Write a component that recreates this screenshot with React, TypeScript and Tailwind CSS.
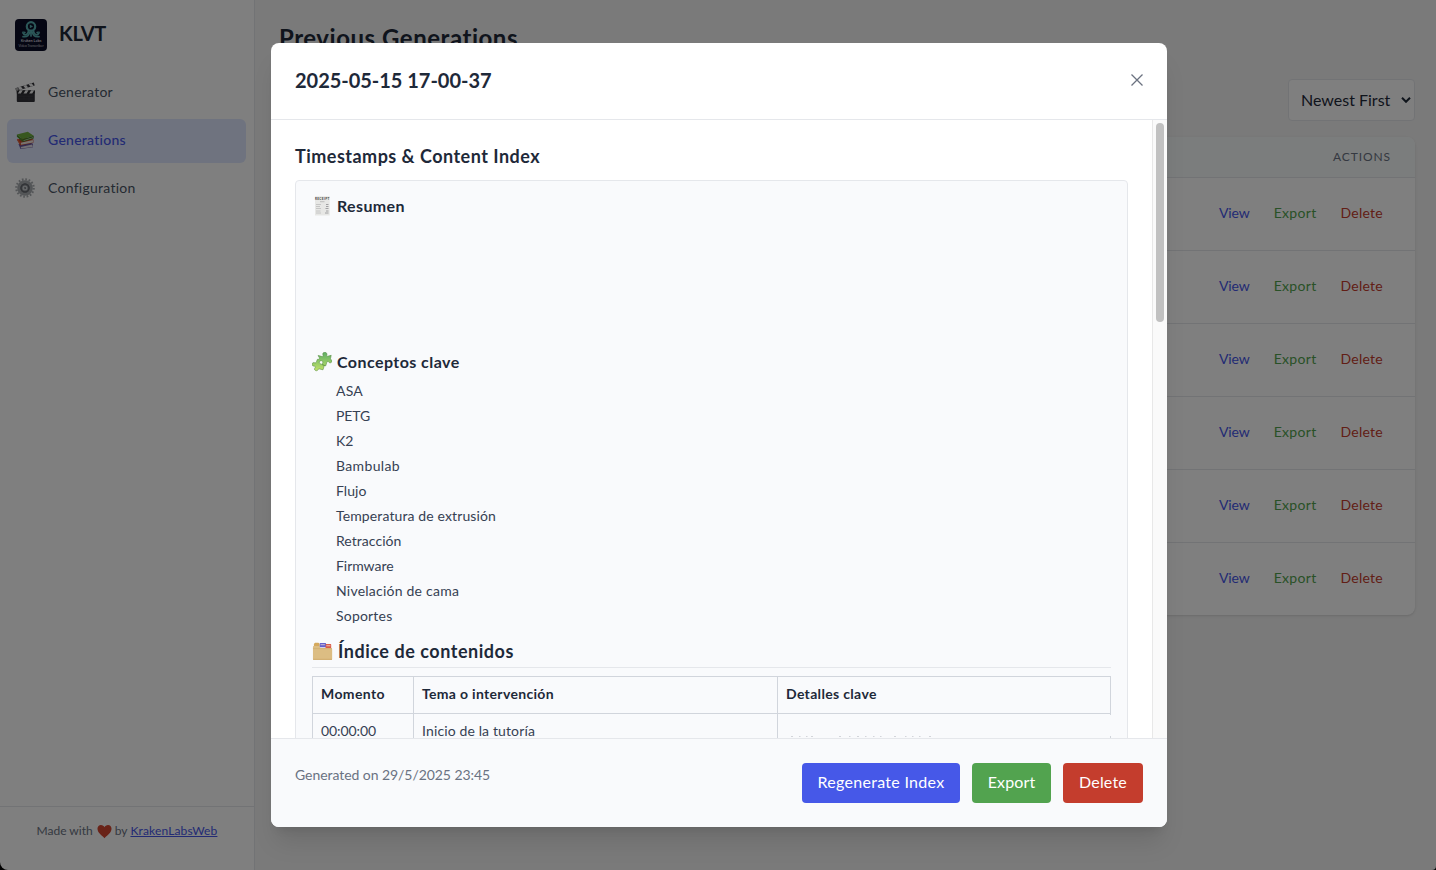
import React from "react";

function KrakenLogo() {
  return (
    <svg viewBox="0 0 32 32" className="h-8 w-8 shrink-0 rounded">
      <rect width="32" height="32" fill="#0b0d26" />
      <g fill="none" stroke="#57aeb0" strokeWidth="1.7" strokeLinecap="round">
        <circle cx="16" cy="7.400" r="4.200" strokeWidth="2.200" />
        <path d="M13.500 11.500c0 3-2 4.600-3.600 4.300-1.800-.3-1.300-2.600 0-2.300M18.500 11.500c0 3 2 4.600 3.600 4.300 1.800-.3 1.300-2.600 0-2.300" />
        <path d="M14.500 13c0 3-2 5.300-6.500 4.600M17.500 13c0 3 2 5.300 6.500 4.600M16 12v5" />
        <path d="M8 12.500c-1 .8-.8 2 .2 2.600M24 12.500c1 .8.800 2-.2 2.600" strokeWidth="1" />
      </g>
      <path d="M14.800 5.500l3.200 1.900-3.200 1.900z" fill="#57aeb0" />
      <text x="16" y="23" textAnchor="middle" fontSize="3.800" fontWeight="700" fill="#d4d4dc" className="font-['Lato']">Kraken Labs</text>
      <text x="16" y="28.200" textAnchor="middle" fontSize="3.300" fill="#c4c4d0" className="font-['Lato']">Video Transcriber</text>
    </svg>
  );
}

function Clapper() {
  return (
    <svg viewBox="0 0 20 20" className="h-5 w-5">
      <path d="M.4 6.200L18.800.6l.9 2.900L1.400 9z" fill="#34343a" />
      <path d="M2.800 5.500l3-.9 2 2.400-3 .9zM8.200 3.800l3-.9 2 2.500-3 .9zM13.600 2.200l3-.9 2 2.500-3 .9z" fill="#f2f2f2" />
      <rect x="1.800" y="8.300" width="18" height="11.700" rx=".9" fill="#323238" />
      <path d="M1.800 8.500h18v3h-18z" fill="#29292d" />
      <path d="M4.800 8.300h3l-2 3.100h-3zM10.500 8.300h3l-2 3.100h-3zM16.200 8.300h3l-2 3.100h-3z" fill="#f2f2f2" />
      <path d="M3.200 14.200h15M3.200 17h15M9 14v3M14 14v5" stroke="#45454c" strokeWidth=".5" />
      <circle cx="2" cy="7.300" r="1.500" fill="#aaa" />
    </svg>
  );
}

function Books() {
  return (
    <svg viewBox="0 0 20 20" className="h-5 w-5">
      <path d="M3.500 14.300l2 4.800 12.500-1.800v-3.500l-7-3z" fill="#6957a0" />
      <path d="M5.700 17l11.600-2.400.5 2.300-11.600 1.700z" fill="#e4e0e8" />
      <path d="M2.200 9.500l3.200 6 13-2.700V9.500l-8-2z" fill="#c9442c" />
      <path d="M5.700 12.800L17.800 10l.3 2.500-12 2.300z" fill="#eee6df" />
      <path d="M2.200 8.500l3.200 4.200v2.800L1.900 10z" fill="#e0643e" />
      <path d="M1.900 4.600L12.800 1.700l5.900 4.100-11 3.500z" fill="#6fae3c" />
      <path d="M1.900 4.600l5.800 4.700v2.600L1.900 6.800z" fill="#4d8e29" />
      <path d="M7.700 9.300l11-3.500v2.700l-11 3.400z" fill="#417d25" />
      <path d="M8.500 10.200l9.600-3v.8l-9.600 3z" fill="#c5d3b0" />
    </svg>
  );
}

function Gear() {
  return (
    <svg viewBox="0 0 20 20" className="h-5 w-5">
      <circle cx="10" cy="10" r="8.700" fill="none" stroke="#a9adb1" strokeWidth="2.200" strokeDasharray="1.700 1.717" />
      <circle cx="10" cy="10" r="6.500" fill="none" stroke="#a6aaae" strokeWidth="2.600" />
      <circle cx="10" cy="10" r="5.200" fill="#7c8086" />
      <circle cx="10" cy="10" r="4" fill="none" stroke="#5c6066" strokeWidth=".8" />
      <circle cx="10" cy="10" r="2.600" fill="#c9ccd0" />
      <path d="M9.500 8.800l1.700 1.200-1.500 1.300z" fill="#45484d" />
    </svg>
  );
}

function Heart() {
  return (
    <svg viewBox="0 0 16 15" className="h-[15px] w-[15px]">
      <path d="M8 14.600C5 11.700.5 8.600.5 4.600.5 2.200 2.200.6 4.200.6 6 .6 7.300 1.600 8 3c.7-1.400 2-2.400 3.800-2.400 2 0 3.700 1.600 3.700 4 0 4-4.500 7.100-7.500 10z" fill="#d34631" />
    </svg>
  );
}

function Receipt() {
  return (
    <svg viewBox="0 0 20 20" className="h-5 w-5">
      <path d="M3 .3h14.700v19.300H3z" fill="#e7e7e5" />
      <text x="10.300" y="4.100" textAnchor="middle" fontSize="3.100" fontWeight="700" fill="#444" className="font-['Lato']">RECEIPT</text>
      <path d="M8 5.700h4.500" stroke="#aaa" strokeWidth=".7" />
      <path d="M4 8.500h5M4 10.500h4M4 12.500h5M4 15h4.500M4 17h5" stroke="#bcbcbd" strokeWidth=".8" />
      <path d="M14 8.500h2.500M14 10.500h2.500M13.500 12.500h3M14 15h2.500M13 17h3.500" stroke="#97979a" strokeWidth=".9" />
    </svg>
  );
}

function Puzzle() {
  return (
    <svg viewBox="0 0 20 20" className="h-5 w-5">
      <defs>
        <linearGradient id="leaf" x1="0" y1="0" x2="0" y2="1">
          <stop offset="0" stopColor="#5eae66" />
          <stop offset="1" stopColor="#c1e268" />
        </linearGradient>
      </defs>
      <path
        d="M6.200 3.400l3.800 1.200c1 .2 1.300-.5 1-1.400-.6-1.800.2-3 1.900-2.900 1.700.1 2.400 1.500 1.900 2.800-.4.900.1 1.400 1.100 1.100l3.300-.9-.7 3.200c-.1.900.4 1.200 1 1.400.8.400.6 2.300-.7 2.800-1.200.4-1.900-.5-2.400-1-.7-.5-1.400-.1-1.600.6l-1.100 3.600-3-1c-.8-.4-.6-1.100-.1-1.800.6-1 .1-2.200-1.200-2.400-1.400-.2-2.200.9-2 2.100.2.9.9 1 1.700 1.400l3.300 1.100-1.400 4.500-3.600-.9c-1-.2-1.100.7-1.800 1.400-1.200 1-3.200.2-3.100-1.400.1-1 1.100-1.400.8-2.300-.3-.7-1.600-.2-2.400-.7-1.300-.7-1.100-2.700.2-3.200 1-.4 1.700.3 2.500.1.900-.3 1.200-2.100 1.500-3.100.3-.8 1.600.2 2.200-.9.500-1.100-.5-1.900-1.100-2.700z"
        fill="url(#leaf)"
        stroke="#5a8f45"
        strokeWidth=".6"
      />
    </svg>
  );
}

function Dividers() {
  return (
    <svg viewBox="0 0 22 20" className="h-5 w-[21px]">
      <path d="M2 6V3.200C2 2 3 1.400 4 1.400h2.500c1 0 1.500.8 1.500 1.600V6z" fill="#d5a95d" />
      <path d="M8.300 1.500h5.400c.7 0 1 .5 1 1V6H8z" fill="#6460cd" />
      <path d="M14.500 2.600h4.600c.7 0 1 .5 1 1V7h-6z" fill="#db5b45" />
      <path d="M9 3.400h4.500M15 4.500h4.300" stroke="#f0d8d4" strokeWidth=".8" />
      <path d="M1 6c0-.7.400-1.200 1-1.200h5.500l1.500 2h11c.7 0 1.100.4 1.100 1v10.500c0 .6-.5 1-1.100 1H2c-.6 0-1-.4-1-1z" fill="#dcbd83" />
      <path d="M1 7.500h20" stroke="#c6a266" strokeWidth=".5" />
      <path d="M1 18.200h20v.8H1z" fill="#cda768" />
    </svg>
  );
}

const navItems = [
  { label: "Generator", icon: <Clapper />, active: false },
  { label: "Generations", icon: <Books />, active: true },
  { label: "Configuration", icon: <Gear />, active: false },
];

const concepts: [string, string][] = [
  ["ASA", "tracking-[0.2px]"],
  ["PETG", "tracking-[-0.1px]"],
  ["K2", "tracking-normal"],
  ["Bambulab", "tracking-[0.36px]"],
  ["Flujo", "tracking-[0.05px]"],
  ["Temperatura de extrusión", "tracking-[0.12px]"],
  ["Retracción", "tracking-[0.05px]"],
  ["Firmware", "tracking-[-0.05px]"],
  ["Nivelación de cama", "tracking-[0.23px]"],
  ["Soportes", "tracking-[0.2px]"],
];

function Sidebar() {
  return (
    <aside className="flex w-[255px] shrink-0 flex-col border-r border-gray-200 bg-white">
      <div className="flex h-[71px] items-start gap-3 pt-[19px] pl-[15px]">
        <KrakenLogo />
        <h1 className="text-xl leading-[29px] font-bold tracking-[-0.32px] text-gray-800">KLVT</h1>
      </div>
      <nav className="flex flex-1 flex-col gap-1 pr-2 pl-[7px]">
        {navItems.map((n) => (
          <a
            key={n.label}
            className={
              "flex h-11 items-center gap-[13px] rounded-md pl-2 text-sm tracking-[0.26px] " +
              (n.active ? "bg-[#dfe7ff] font-medium text-[#4656e8]" : "text-gray-600")
            }
          >
            <span className="pb-[2px]">{n.icon}</span>
            <span className="pb-[2px]">{n.label}</span>
          </a>
        ))}
      </nav>
      <div className="flex h-16 items-start justify-center border-t border-gray-200 pt-4 text-xs leading-4 text-gray-500">
        <p className="flex items-center">
          <span>Made with</span>
          <span className="mr-[3px] ml-1"><Heart /></span>
          <span className="mr-[3px]">by</span>
          <a className="tracking-[0.14px] text-[#4656e8] underline">KrakenLabsWeb</a>
        </p>
      </div>
    </aside>
  );
}

function GenerationsPage() {
  return (
    <main className="flex flex-1 flex-col bg-[#f4f4f4] pr-[21px] pl-6">
      <h2 className="mt-[22px] text-2xl leading-8 font-bold tracking-[0.53px] text-gray-800">Previous Generations</h2>
      <div className="mt-[25px] flex h-[42px] w-[127px] items-center justify-between self-end rounded border border-gray-200 bg-white pr-[3px] pl-3 text-base text-gray-800">
        <span className="pb-px">Newest First</span>
        <svg viewBox="0 0 10 6" className="h-[6px] w-[10px]" fill="none" stroke="#1f2937" strokeWidth="2">
          <path d="M1 .8l4 4 4-4" />
        </svg>
      </div>
      <div className="mt-4 overflow-hidden rounded-lg bg-white shadow">
        <div className="flex h-10 items-center justify-end bg-[#f6fafa] pr-6 text-xs tracking-[0.9px] text-gray-500">ACTIONS</div>
        {[0, 1, 2, 3, 4, 5].map((i) => (
          <div key={i} className="flex h-[73px] items-center justify-end gap-6 border-t border-gray-200 pr-8 pb-[2px] text-sm">
            <a className="tracking-[-0.1px] text-[#4656e8]">View</a>
            <a className="tracking-[0.3px] text-[#52a34f]">Export</a>
            <a className="tracking-[0.26px] text-[#c43d2d]">Delete</a>
          </div>
        ))}
      </div>
    </main>
  );
}

function DetailModal() {
  return (
    <section className="flex h-[784px] w-[896px] flex-col overflow-hidden rounded-lg bg-white text-gray-800 shadow-xl">
      <header className="flex h-[77px] shrink-0 items-center justify-between border-b border-gray-200 px-6 pb-[3px]">
        <h2 className="text-xl font-bold tracking-[-0.03px]">2025-05-15 17-00-37</h2>
        <svg viewBox="0 0 12 12" className="mt-px h-3 w-3" fill="none" stroke="#6b7280" strokeWidth="1.300">
          <path d="M.5.500l11 11M11.500.500L.5 11.500" />
        </svg>
      </header>
      <div className="flex min-h-0 flex-1">
        <div className="min-w-0 flex-1 overflow-hidden px-6 pt-6">
          <h3 className="h-9 text-lg leading-6 font-bold tracking-[0.48px]">Timestamps &amp; Content Index</h3>
          <div className="h-[900px] rounded border border-gray-200 bg-[#f9fafc] px-4 pt-[13px]">
            <h4 className="flex h-6 items-center gap-[5px] text-base font-bold tracking-[0.36px]">
              <Receipt />
              Resumen
            </h4>
            <div className="h-[132px]" />
            <h4 className="flex h-6 items-center gap-[5px] text-base font-bold tracking-[0.44px]">
              <Puzzle />
              Conceptos clave
            </h4>
            <ul className="mt-1 pl-6 text-sm leading-[25px] text-gray-700">
              {concepts.map(([label, tracking]) => (
                <li key={label} className={tracking}>{label}</li>
              ))}
            </ul>
            <h3 className="mt-[10px] flex h-[30px] items-start gap-[5px] border-b border-gray-200 text-lg leading-[27px] font-bold tracking-[0.54px]">
              <span className="pt-[3px]"><Dividers /></span>
              Índice de contenidos
            </h3>
            <div className="mt-2 grid grid-cols-[101px_364px_334px] text-sm text-gray-700">
              <div className="h-[37px] border-t border-l border-gray-300 pl-2 leading-[33px] font-bold tracking-[0.37px] text-gray-800">Momento</div>
              <div className="border-t border-l border-gray-300 pl-2 leading-[33px] font-bold tracking-[0.32px] text-gray-800">Tema o intervención</div>
              <div className="border-x border-t border-gray-300 pl-2 leading-[33px] font-bold tracking-[0.33px] text-gray-800">Detalles clave</div>
              <div className="h-[50px] border-t border-l border-gray-300 pl-2 leading-[33px] tracking-[-0.09px]">00:00:00</div>
              <div className="border-t border-l border-gray-300 pl-2 leading-[33px] tracking-[0.13px]">Inicio de la tutoría</div>
              <div className="flex flex-col items-end border-t border-l border-gray-300">
                <span className="h-px w-px bg-gray-300" />
                <svg className="mt-[21px] h-[2px] w-full" viewBox="0 0 333 2">
                  <path d="M13 .5h2M21 .5h1.500M28 .5h1.500M33 .5h2M61 .5h2M71 .5h1.500M79 .5h2M87 .5h1.500M95 .5h1.500M102 .5h1.500M116 .5h2M127 .5h1.500M134 .5h1.500M141 .5h1.500M151 .5h2" stroke="#d3d5da" />
                  <path d="M332.500 0v2" stroke="#d1d5db" />
                </svg>
              </div>
            </div>
          </div>
        </div>
        <div className="flex w-[15px] justify-center border-l border-[#e8e8e8] bg-[#fafafa] pt-[3px]">
          <div className="h-[199px] w-2 rounded-full bg-[#c1c1c1]" />
        </div>
      </div>
      <footer className="flex h-[89px] shrink-0 justify-between border-t border-gray-200 bg-[#f9fafc] px-6 pt-6">
        <p className="pt-0.5 text-sm tracking-[-0.06px] text-gray-500">Generated on 29/5/2025 23:45</p>
        <div className="flex h-10 gap-3 text-base leading-[38px] text-white">
          <button className="w-[158px] rounded bg-[#4658e8] pb-[2px] tracking-[0.29px]">Regenerate Index</button>
          <button className="w-[79px] rounded bg-[#52a34f] pb-[2px] tracking-[0.12px]">Export</button>
          <button className="w-20 rounded bg-[#c43d2d] pb-[2px] tracking-[0.2px]">Delete</button>
        </div>
      </footer>
    </section>
  );
}

export default function App() {
  return (
    <div className="relative flex h-[870px] w-full overflow-hidden bg-black font-['Lato',sans-serif]">
      <div className="flex flex-1 overflow-hidden rounded-br-[4px] rounded-bl-[8px]">
        <Sidebar />
        <GenerationsPage />
      </div>
      <div className="absolute inset-0 flex justify-center bg-black/50 pt-[43px] pl-[2px]">
        <DetailModal />
      </div>
    </div>
  );
}
